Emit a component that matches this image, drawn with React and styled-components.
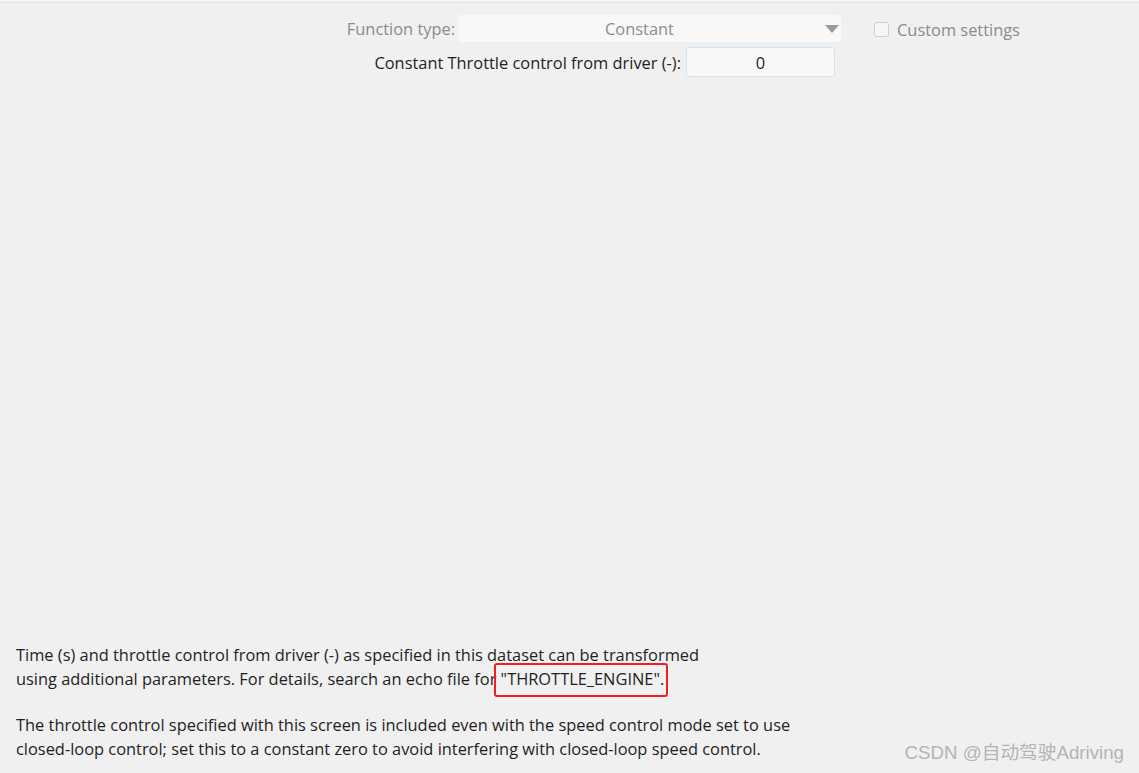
import React from "react";
import { styled, createGlobalStyle } from "styled-components";

const Global = createGlobalStyle`
  html, body {
    margin: 0;
    padding: 0;
    background: #f0f0f0;
  }
  * { box-sizing: border-box; }
`;

function App() {
  return (
    <>
      <Global />
      <Page>
        <TopLine />
        <Form>
          <FieldColumn>
            <Row>
              <Label muted>Function type:</Label>
              <Select>
                <span>Constant</span>
                <Arrow />
              </Select>
            </Row>
            <Row inset={6}>
              <Label>Constant Throttle control from driver (-):</Label>
              <Input>0</Input>
            </Row>
          </FieldColumn>
          <Check>
            <Box />
            <span>Custom settings</span>
          </Check>
        </Form>
        <Notes>
          <p>
            Time (s) and throttle control from driver (-) as specified in this dataset can be transformed
            <br />
            using additional parameters. For details, search an echo file for <Marked>"THROTTLE_ENGINE"</Marked>.
          </p>
          <p>
            The throttle control specified with this screen is included even with the speed control mode set to use
            <br />
            closed-loop control; set this to a constant zero to avoid interfering with closed-loop speed control.
          </p>
        </Notes>
        <Watermark>CSDN @自动驾驶Adriving</Watermark>
      </Page>
    </>
  );
}

const Page = styled.div`
  position: relative;
  height: 773px;
  display: flex;
  flex-direction: column;
  font-family: "Open Sans", "Noto Sans", sans-serif;
  font-size: 16.4px;
  color: #1f1f1f;
  overflow: hidden;
`;
const TopLine = styled.div`
  height: 3px;
  border-bottom: 1px solid #e2e2e2;
  background: #f4f4f4;
`;
const Form = styled.div`
  display: flex;
  align-items: flex-start;
  padding: 12px 0 0 300px;
`;
const FieldColumn = styled.div`
  display: flex;
  flex-direction: column;
  align-items: flex-end;
  width: 541px;
  gap: 5px;
`;
const Row = styled.div`
  display: flex;
  align-items: center;
  margin-right: ${(p) => p.inset || 0}px;
`;
const Label = styled.div`
  color: ${(p) => (p.muted ? "#8b8b8b" : "#1f1f1f")};
  margin-right: ${(p) => (p.muted ? 3 : 5)}px;
  white-space: nowrap;
`;
const Select = styled.div`
  position: relative;
  width: 383px;
  height: 27px;
  background: #f8f8f8;
  border-radius: 3px;
  display: flex;
  align-items: center;
  justify-content: center;
  color: #8d8d8d;
  span {
    margin-right: 20px;
  }
`;
const Arrow = styled.i`
  position: absolute;
  right: 2px;
  top: 10px;
  width: 0;
  height: 0;
  border-left: 7px solid transparent;
  border-right: 7px solid transparent;
  border-top: 8px solid #9b9b9b;
`;
const Input = styled.div`
  width: 149px;
  height: 30px;
  background: #f8f8f8;
  border: 1px solid #cde5f8;
  border-radius: 3px;
  display: flex;
  align-items: center;
  justify-content: center;
  color: #1f1f1f;
`;
const Check = styled.label`
  display: flex;
  align-items: center;
  gap: 8px;
  margin-left: 33px;
  margin-top: 3px;
  color: #8b8b8b;
`;
const Box = styled.span`
  width: 15px;
  height: 15px;
  border: 1px solid #cfcfcf;
  border-radius: 3px;
  background: #f6f6f6;
`;
const Notes = styled.div`
  margin-top: auto;
  padding: 0 0 12px 16px;
  line-height: 24px;
  p {
    margin: 0;
  }
  p + p {
    margin-top: 22px;
  }
`;
const Marked = styled.span`
  position: relative;
  &::after {
    content: "";
    position: absolute;
    left: -7px;
    right: -8px;
    top: -4px;
    bottom: -7px;
    border: 2px solid #f2201c;
    border-radius: 3px;
  }
`;
const Watermark = styled.div`
  position: absolute;
  right: 15px;
  bottom: 9px;
  font-family: "Liberation Sans", "Noto Sans CJK SC", sans-serif;
  font-size: 18.7px;
  color: #b4b4b4;
`;

export default App;
